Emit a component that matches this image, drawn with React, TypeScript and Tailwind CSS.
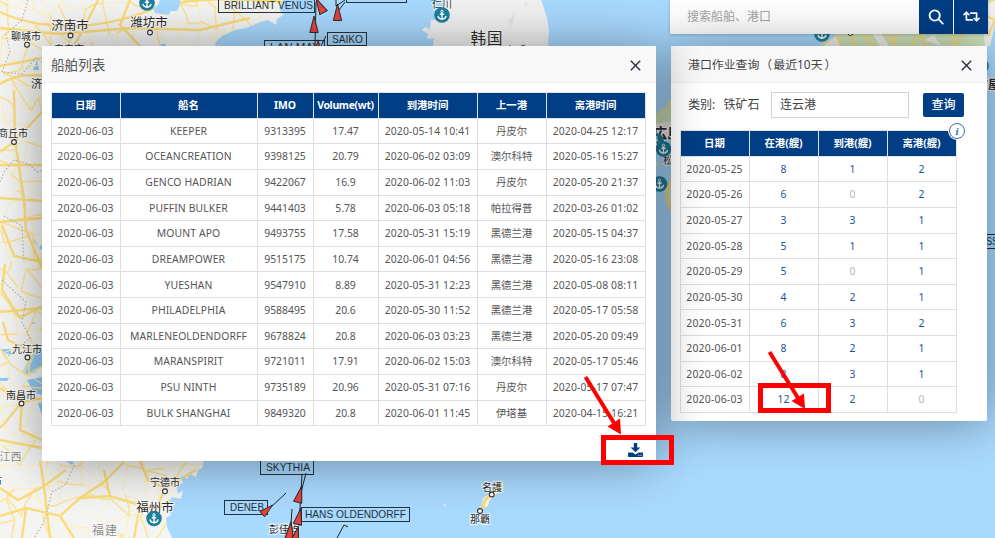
import React from "react";
import { FaRetweet } from "react-icons/fa";

const cjk = "font-['Noto_Sans','Noto_Sans_CJK_SC',sans-serif]";

const ships = [
  ["KEEPER", "9313395", "17.47", "2020-05-14 10:41", "丹皮尔", "2020-04-25 12:17"],
  ["OCEANCREATION", "9398125", "20.79", "2020-06-02 03:09", "澳尔科特", "2020-05-16 15:27"],
  ["GENCO HADRIAN", "9422067", "16.9", "2020-06-02 11:03", "丹皮尔", "2020-05-20 21:37"],
  ["PUFFIN BULKER", "9441403", "5.78", "2020-06-03 05:18", "帕拉得普", "2020-03-26 01:02"],
  ["MOUNT APO", "9493755", "17.58", "2020-05-31 15:19", "黑德兰港", "2020-05-15 04:37"],
  ["DREAMPOWER", "9515175", "10.74", "2020-06-01 04:56", "黑德兰港", "2020-05-16 23:08"],
  ["YUESHAN", "9547910", "8.89", "2020-05-31 12:23", "黑德兰港", "2020-05-08 08:11"],
  ["PHILADELPHIA", "9588495", "20.6", "2020-05-30 11:52", "黑德兰港", "2020-05-17 05:58"],
  ["MARLENEOLDENDORFF", "9678824", "20.8", "2020-06-03 03:23", "黑德兰港", "2020-05-20 09:49"],
  ["MARANSPIRIT", "9721011", "17.91", "2020-06-02 15:03", "澳尔科特", "2020-05-17 05:46"],
  ["PSU NINTH", "9735189", "20.96", "2020-05-31 07:16", "丹皮尔", "2020-05-17 07:47"],
  ["BULK SHANGHAI", "9849320", "20.8", "2020-06-01 11:45", "伊塔基", "2020-04-15 16:21"],
];

const portRows: [string, number, number, number][] = [
  ["2020-05-25", 8, 1, 2],
  ["2020-05-26", 6, 0, 2],
  ["2020-05-27", 3, 3, 1],
  ["2020-05-28", 5, 1, 1],
  ["2020-05-29", 5, 0, 1],
  ["2020-05-30", 4, 2, 1],
  ["2020-05-31", 6, 3, 2],
  ["2020-06-01", 8, 2, 1],
  ["2020-06-02", 8, 3, 1],
  ["2020-06-03", 12, 2, 0],
];

/* Secondary roads: a jittered lattice with a fixed seed, so every load draws the same map. */
function lattice() {
  let s = 7;
  const rnd = () => {
    s = (s * 16807) % 2147483647;
    return s / 2147483647;
  };
  const step = 19;
  const cols = 17;
  const rows = 30;
  const pts: number[][][] = [];
  for (let r = 0; r < rows; r++) {
    pts.push([]);
    for (let c = 0; c < cols; c++) {
      pts[r].push([c * step - 10 + (rnd() - 0.5) * 17, r * step - 10 + (rnd() - 0.5) * 17]);
    }
  }
  let minor = "";
  let major = "";
  const seg = (a: number[], b: number[]) => {
    const mx = (a[0] + b[0]) / 2 + (rnd() - 0.5) * 8;
    const my = (a[1] + b[1]) / 2 + (rnd() - 0.5) * 8;
    const d = `M${a[0].toFixed(1)} ${a[1].toFixed(1)}Q${mx.toFixed(1)} ${my.toFixed(1)} ${b[0].toFixed(1)} ${b[1].toFixed(1)}`;
    if (rnd() < 0.4) major += d;
    else minor += d;
  };
  for (let r = 0; r < rows; r++)
    for (let c = 0; c < cols; c++) {
      if (c + 1 < cols && rnd() < 0.85) seg(pts[r][c], pts[r][c + 1]);
      if (r + 1 < rows && rnd() < 0.85) seg(pts[r][c], pts[r + 1][c]);
      if (c + 1 < cols && r + 1 < rows && rnd() < 0.3) seg(pts[r][c], pts[r + 1][c + 1]);
    }
  return { minor, major };
}
const roads = lattice();

function Anchor({ x, y }: { x: number; y: number }) {
  return (
    <g transform={`translate(${x} ${y})`}>
      <circle r="7.8" fill="#1d7f9e" />
      <circle cy="-3.6" r="1.2" fill="none" stroke="#fff" strokeWidth="1" />
      <path d="M0-2.4V4M-2.2-.8H2.2M-4 .9C-3.8 3-2 4 0 4.2 2 4 3.8 3 4 .9" fill="none" stroke="#fff" strokeWidth="1.4" />
    </g>
  );
}

function Place({ x, y, size = 10, t, dot, grey, bold, gap = 0 }: { x: number; y: number; size?: number; t: string; dot?: [number, number]; grey?: boolean; bold?: boolean; gap?: number }) {
  return (
    <g>
      <text x={x} y={y + size * 0.36} textAnchor="middle" fontSize={size} letterSpacing={gap} fill={grey ? "#8b8b8b" : "#2c2c2c"} stroke="#fff" strokeWidth="2" strokeOpacity=".8" paintOrder="stroke" fontWeight={bold ? 700 : 400}>
        {t}
      </text>
      {dot && <circle cx={dot[0]} cy={dot[1]} r="2.4" fill="#fff" stroke="#333" strokeWidth="1.1" />}
    </g>
  );
}

function ShipTag({ x, y, w, h = 14, tx, tw, t }: { x: number; y: number; w: number; h?: number; tx: number; tw: number; t: string }) {
  return (
    <g>
      <rect x={x + 0.5} y={y + 0.5} width={w} height={h - 1} fill="none" stroke="#26323c" />
      <text x={tx} y={y + h / 2 + 3.7} fontSize="11.2" textLength={tw} lengthAdjust="spacingAndGlyphs" fill="#26323c" className="font-['Liberation_Sans',sans-serif]">
        {t}
      </text>
    </g>
  );
}

function Boat({ x, y, a, s = 1 }: { x: number; y: number; a: number; s?: number }) {
  return <path transform={`translate(${x} ${y}) rotate(${a}) scale(${s})`} d="M0-9L4.2 7.5H-4.2Z" fill="#e2433d" stroke="#222" strokeWidth=".9" />;
}

function MapCanvas() {
  return (
    <svg className={`absolute inset-0 ${cjk}`} width="995" height="538" viewBox="0 0 995 538">
      <defs>
        <clipPath id="china">
          <path d="M0 0H160L158 5 153 8 155 13 168 15 171 11 177 11 181 3 180 0H283L279 8 283 15 277 19 276 25 268 20 260 22 246 28 235 30 222 36 216 42 210 60V461H204L202 468 198 470 196 477 190 474 187 479 181 475 183 483 176 486 178 494 183 490 181 499 172 497 168 505 171 515 166 518 167 527 172 538H0Z" />
        </clipPath>
        <clipPath id="japan">
          <path d="M820 46L824 41 834 38 839 30 995 0V24L990 46ZM672 98L664 108 656 114V136H672ZM672 176L665 190 666 203 672 214ZM656 162l4 3-4 2z" />
        </clipPath>
      </defs>
      <rect width="995" height="538" fill="#a8d9ff" />
      <g clipPath="url(#china)">
        <rect width="300" height="538" fill="#f4f4f3" />
        <path d="M22 372l12-22 8-4v18l-12 8z" fill="#cfe3c4" />
        <path d="M24 375l8-13 5-15 5-2v21l-8 7zM27 380l15-3v18l-8-2zM38 404l4-3v14zM0 378h9l-2 3H0zM33 70l4-10 2 10zM33 238l4 4 1 6zM39 248l3-4v6zM31 321l5 2-3 1zM0 349l10 0 3 6-9-2zM66 461l8 1-2 3zM160 44h6l-2 4z" fill="#90cbf6" />
        <path d={roads.minor} fill="none" stroke="#fdf0bd" strokeWidth="1" />
        <path d={roads.major} fill="none" stroke="#fce59a" strokeWidth="1.6" />
        <path
          d="M0 12Q30 26 70 26T150 10 285 2M0 28L60 34 130 28 200 30 250 18M98 0L85 26 74 46M130 0L120 25 140 46M0 66L42 58M0 84Q20 72 42 76M14 90L15 140 24 200 26 230 42 268M0 165H42M0 198L42 201M0 222L42 218M14 142L0 152M14 142L42 112M2 225L14 256 42 262M5 264L2 290 20 318 42 306M0 312L42 308M3 322L8 340 28 350M0 388L22 402 42 398M22 402L20 430 42 440M22 402L4 424 0 428M0 440L42 448M0 488L18 500 44 486 66 470M0 516L26 508 60 516 80 498 104 482 124 462M60 516L74 538M80 498L110 496 140 505 156 511 170 500M140 505L134 538M156 511L165 488 196 470M110 496L104 470M26 508L22 538M40 461L44 486 50 538M140 461L148 480 165 488"
          fill="none"
          stroke="#fbdc7c"
          strokeWidth="2.4"
        />
        <path d="M28 0L22 20 6 34 10 52 2 72 22 74 36 58 42 62M0 182L4 172 14 160 28 164 38 172 42 170M4 216L22 226 24 262M2 280L26 302 22 322 30 338 8 356M74 465L66 484 52 492 48 508 44 522 34 538" fill="none" stroke="#b4b4b4" strokeWidth="1.2" strokeDasharray="1.5 2" />
      </g>
      <path d="M425 27L422 30 428 34 427 39 434 38 433 46H548L549 30 547 18 543 5 541 0H447L441 12 436 20 431 20 430 29Z" fill="#f1f1f1" />
      <path d="M507 22L516 12 512 26ZM524 3l6-1-5 5Z" fill="#e4e6e6" />
      <path d="M510 46v-1M521 46l4-1" stroke="#555" />
      <g clipPath="url(#japan)">
        <rect x="650" width="345" height="220" fill="#cfe3bb" />
        <path d="M824 46l12-12 4 12zM872 33l9 0 8 13h-9zM925 40l9-5 7 11zM980 0h15v46h-10zM656 124l16-3v15h-16z" fill="#f1efe9" />
        <path d="M820 44l16-9 6 11M850 33l6 13M862 33l12 13M888 33l5 13 4-13M912 46l8-13 5 13M950 33l6 13 6-13M986 3l9-3M985 15l10 5-7 16M672 178l-6 18 5 14M656 115l16-16" fill="none" stroke="#f8d878" strokeWidth="2" />
      </g>
      <path d="M491 489l11-8 2 6-8 7-7 7-1 5-7 3 2-11 8-5z" fill="#fff4cc" />
      <path d="M502 482l-7 9-10 9-3 9" stroke="#f7db83" strokeWidth="3" fill="none" />
      <path d="M502 483l3 1-2 8-7 3z" fill="#c5e5c6" />
      <path d="M443 504l3 1-1 2zM514 461l2 0-1 1z" fill="#f5f5f5" />

      <Place x={26} y={36} t="聊城市" dot={[27, 44.7]} />
      <Place x={70} y={25} size={12.5} t="济南市" dot={[70.5, 35.5]} />
      <Place x={69} y={49} t="泰安市" />
      <Place x={149} y={22} size={12.5} t="潍坊市" dot={[150, 32.5]} />
      <Place x={42} y={84.5} size={11} t="济宁" />
      <Place x={13} y={133} t="商丘市" dot={[14, 142]} />
      <Place x={27} y={349} t="九江市" dot={[27.5, 357.5]} />
      <Place x={21} y={395} t="南昌市" dot={[21.5, 403.5]} />
      <Place x={10.5} y={457} size={11} t="江西" grey />
      <Place x={165} y={482.5} t="宁德市" dot={[165, 491.3]} />
      <Place x={-3} y={481} t="市" />
      <Place x={155} y={507} size={12.5} t="福州市" />
      <Place x={105} y={530.5} size={12} t="福建" grey gap={1} />
      <Place x={487} y={38} size={15.5} t="韩国" gap={1} />
      <Place x={442} y={4.5} t="仁川" />
      <Place x={492} y={487} t="名護" dot={[491.7, 494.5]} />
      <Place x={480} y={519} t="那覇" dot={[480, 511]} />
      <Place x={284} y={529.5} t="彭佳屿" />
      <Place x={667} y={133} size={14} t="広島" bold />
      <Place x={673} y={160} t="松山" />
      <Place x={982} y={85} size={12} t="名古屋" bold />
      <circle cx="850.5" cy="33" r="2.5" fill="#fff" stroke="#333" />
      <Anchor x={147} y={3} />
      <Anchor x={434} y={-7} />
      <Anchor x={442} y={15} />
      <Anchor x={154} y={518.5} />
      <Anchor x={822} y={34} />
      <Anchor x={656} y={141} />
      <Anchor x={663.5} y={149} />
      <Anchor x={659.5} y={184} />
      <Anchor x={981} y={66} />

      <ShipTag x={218} y={-2} w={96} h={15} tx={224} tw={89} t="BRILLIANT VENUS" />
      <ShipTag x={264} y={40} w={60} tx={270} tw={50} t="LAN MAY" />
      <ShipTag x={327} y={32} w={39} tx={332} tw={31} t="SAIKO" />
      <ShipTag x={346} y={-11} w={60} tx={352} tw={50} t="MARINA" />
      <ShipTag x={260} y={460} w={53} h={15} tx={266} tw={44} t="SKYTHIA" />
      <ShipTag x={224} y={500} w={43} h={15} tx={230} tw={34} t="DENEB" />
      <ShipTag x={301} y={507} w={108} h={15} tx={305} tw={101} t="HANS OLDENDORFF" />
      <ShipTag x={940} y={234} w={70} h={15} tx={986} tw={26} t="SSA A" />
      <path d="M316 2L315 46M336 0v6L345 0M345 2l-6 8M326 36l-5 10M306 473L299 500M286 493L270 508M292 509L290 538M302 474l-3 52M337 538L344 525 348 527" stroke="#222" strokeWidth="1" fill="none" />
      <Boat x={320} y={6} a={-28} />
      <Boat x={314} y={25} a={0} />
      <Boat x={337.5} y={13} a={0} />
      <Boat x={318} y={47} a={0} s={0.8} />
      <Boat x={299.5} y={495} a={14} />
      <Boat x={267} y={510} a={48} s={0.85} />
      <Boat x={299} y={517} a={12} />
      <Boat x={290} y={532} a={6} s={1.15} />
      <Boat x={296} y={536} a={14} s={1.1} />
    </svg>
  );
}

function CloseIcon() {
  return (
    <svg className="mt-[2px]" width="11" height="11" viewBox="0 0 11 11" fill="none" stroke="#2e2d3c" strokeWidth="1.4">
      <path d="M.8.8L10.2 10.2M10.2.8L.8 10.2" />
    </svg>
  );
}

const th = "border border-[#e2e2e2] bg-[#003e86] p-0 text-center font-bold text-white";
const td = "border border-[#dedede] p-0 text-center";

function ShipPanel() {
  return (
    <section className="relative z-20 mt-[46px] h-[415px] w-[614px] shrink-0 rounded-[2px] bg-white shadow-[1px_1px_50px_rgba(0,0,0,0.4)]">
      <header className="flex h-[37px] items-center justify-between border-b border-[#eeeeee] bg-[#f8f8f8] pl-[9px] pr-[15px]">
        <h2 className="pt-[2px] text-[13.6px] text-[#555]">船舶列表</h2>
        <CloseIcon />
      </header>
      <div className="pl-[8.5px] pt-[9px]">
        <table className="w-[595px] table-fixed border-collapse whitespace-nowrap text-[10.4px] leading-none text-[#555]">
          <colgroup>
            <col className="w-[69px]" />
            <col className="w-[137px]" />
            <col className="w-[56px]" />
            <col className="w-[65px]" />
            <col className="w-[99px]" />
            <col className="w-[69px]" />
            <col className="w-[99px]" />
          </colgroup>
          <thead>
            <tr className="h-[25.6px]">
              {["日期", "船名", "IMO", "Volume(wt)", "到港时间", "上一港", "离港时间"].map((h) => (
                <th key={h} className={h === "Volume(wt)" ? `${th} tracking-[-0.3px]` : th}>{h}</th>
              ))}
            </tr>
          </thead>
          <tbody>
            {ships.map((r) => (
              <tr key={r[1]} className="h-[25.65px]">
                <td className={`${td} tracking-[0.22px]`}>2020-06-03</td>
                {r.map((c, i) => (
                  <td key={i} className={i === 3 || i === 5 ? `${td} tracking-[0.14px]` : i === 0 ? `${td} tracking-[0.12px]` : td}>{c}</td>
                ))}
              </tr>
            ))}
          </tbody>
        </table>
      </div>
      <footer className="flex justify-end pr-[13px] pt-[17px]">
        <svg width="15" height="14" viewBox="0 0 15 14" fill="#003e86">
          <path d="M5.8 0h3.4v4.4h3.2L7.5 9.2 2.6 4.4h3.2z" />
          <path d="M0 9.5h4.4l3.1 2 3.1-2H15v3.7a.8.8 0 0 1-.8.8H.8a.8.8 0 0 1-.8-.8z" />
          <path d="M10.3 11.8h1v.9h-1zM12.5 11.8h1v.9h-1z" fill="#fff" />
        </svg>
      </footer>
    </section>
  );
}

function SearchBar() {
  return (
    <div className="-ml-px flex h-[33.5px] w-[318px] gap-px bg-white shadow-[0_1px_3px_rgba(0,0,0,0.2)]">
      <div className="flex flex-1 items-center pl-[17px] text-[12px] text-[#a5a5a5]">搜索船舶、港口</div>
      <button className="flex w-[34px] items-center justify-center bg-[#003e86]">
        <svg width="16" height="16" viewBox="0 0 16 16" fill="none" stroke="#fff" strokeWidth="1.9" strokeLinecap="round">
          <circle cx="6.7" cy="6.5" r="5.1" />
          <path d="M10.6 10.4L14.8 14.6" />
        </svg>
      </button>
      <button className="flex w-[34px] items-center justify-center bg-[#003e86] text-white">
        <FaRetweet size={17} />
      </button>
    </div>
  );
}

function PortPanel() {
  return (
    <section className="relative mt-[12.5px] h-[375px] w-[316px] rounded-[2px] bg-white shadow-[1px_1px_50px_rgba(0,0,0,0.4)]">
      <header className="flex h-[37px] items-center justify-between border-b border-[#eeeeee] bg-[#f8f8f8] pl-[17px] pr-[15px]">
        <h2 className="flex pt-[2px] text-[11.9px] text-[#444]">
          港口作业查询<span className="pl-[1px] pr-[1px]">（</span>最近10天<span className="pl-[2px]">）</span>
        </h2>
        <CloseIcon />
      </header>
      <div className="flex h-[47px] items-center pb-[3px] pl-[17px] text-[12px] text-[#444]">
        <span className="w-[35.5px]">类别:</span>
        <span className="w-[47.5px]">铁矿石</span>
        <div className="flex h-[26px] w-[138px] items-center border border-[#d2d2d2] pl-[8px]">连云港</div>
        <button className="ml-[14px] h-[24px] w-[41px] rounded-[2px] bg-[#003e86] font-medium text-white">查询</button>
      </div>
      <div className="relative pl-[8.5px]">
        <table className="w-[277px] table-fixed border-collapse whitespace-nowrap text-[10.4px] leading-none text-[#555]">
          <thead>
            <tr className="h-[25.6px]">
              {["日期", "在港(艘)", "到港(艘)", "离港(艘)"].map((h) => (
                <th key={h} className={th}>{h}</th>
              ))}
            </tr>
          </thead>
          <tbody>
            {portRows.map(([d, ...n]) => (
              <tr key={d} className="h-[25.65px]">
                <td className={`${td} tracking-[0.22px]`}>{d}</td>
                {n.map((v, i) => (
                  <td key={i} className={v === 0 ? `${td} text-[#b5b5b5]` : `${td} text-[#1d5396]`}>{v}</td>
                ))}
              </tr>
            ))}
          </tbody>
        </table>
        <span className="absolute left-[278px] top-[-7px] flex size-[16px] items-center justify-center rounded-full border border-[#3c6ba5] bg-white font-['Liberation_Serif',serif] text-[11px] font-bold italic leading-none text-[#3c6ba5] ring-1 ring-white">
          i
        </span>
      </div>
    </section>
  );
}

function Annotations() {
  return (
    <svg className="pointer-events-none absolute inset-0 z-30" width="995" height="538" viewBox="0 0 995 538" fill="none">
      <g stroke="#fe0000">
        <rect x="603.5" y="437.5" width="68" height="25" strokeWidth="5" />
        <rect x="760.5" y="385.5" width="68" height="25" strokeWidth="5" />
        <path d="M585.5 377L614 423M769.5 352L798 398" strokeWidth="4" />
      </g>
      <path d="M621 434.5L607.5 426.5 620 418.5ZM805 409L791.5 401 804 393.5Z" fill="#fe0000" />
    </svg>
  );
}

export default function App() {
  return (
    <main className={`relative h-[538px] w-[995px] overflow-hidden ${cjk}`}>
      <MapCanvas />
      <div className="relative flex items-start gap-[15px] pl-[42px]">
        <ShipPanel />
        <div>
          <SearchBar />
          <PortPanel />
        </div>
      </div>
      <Annotations />
    </main>
  );
}
